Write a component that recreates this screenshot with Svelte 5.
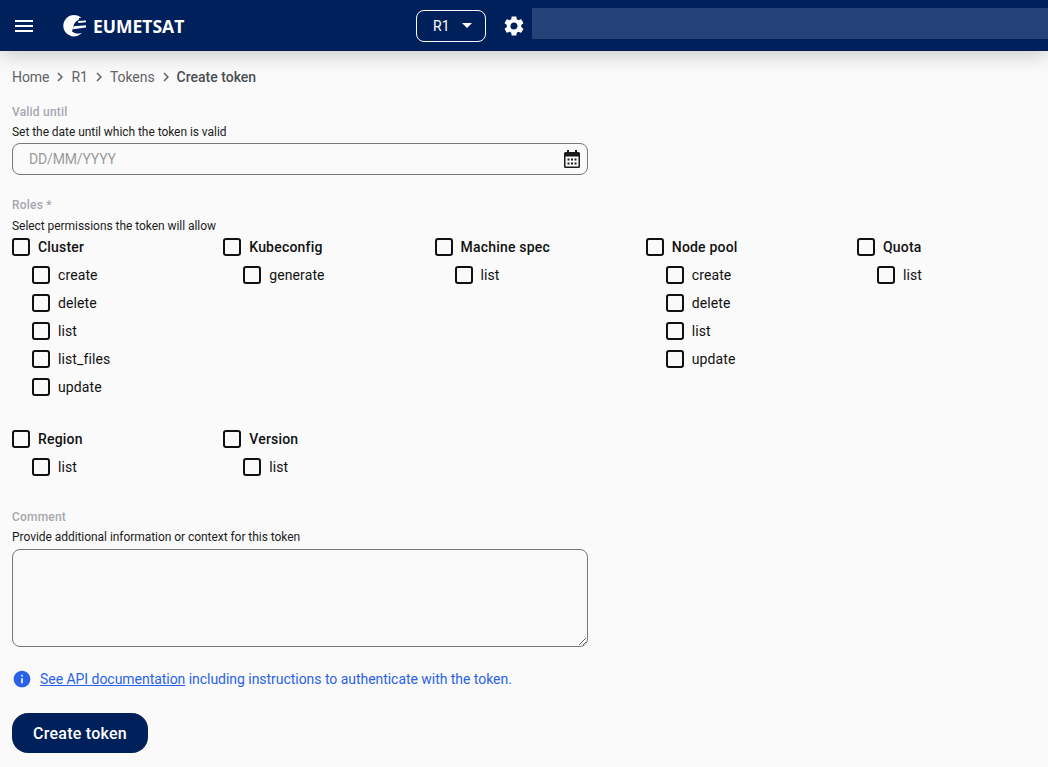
<script>
  const groups = [
    { name: 'Cluster', items: ['create', 'delete', 'list', 'list_files', 'update'] },
    { name: 'Kubeconfig', items: ['generate'] },
    { name: 'Machine spec', items: ['list'] },
    { name: 'Node pool', items: ['create', 'delete', 'list', 'update'] },
    { name: 'Quota', items: ['list'] },
    { name: 'Region', items: ['list'] },
    { name: 'Version', items: ['list'] }
  ];
  const crumbs = ['Home', 'R1', 'Tokens'];
</script>

<header class="topbar">
  <button class="menu" aria-label="Menu">
    <svg width="24" height="24" viewBox="0 0 24 24"><path d="M3 18h18v-2H3v2zm0-5h18v-2H3v2zm0-7v2h18V6H3z" fill="#fff" /></svg>
  </button>
  <div class="logo">
    <svg width="24" height="24" viewBox="0 0 24 24">
      <circle cx="11" cy="11.700" r="10.700" fill="#fff" />
      <path d="M16 5.500C12.500 7 10.500 10 10 14l-1 3.500c3 2.500 8 3 14 0V4H16z" fill="#00205b" />
      <path d="M15 7l8-.5V8.200l-7.500.8zM10.500 12.300 23 11.200v2.200L10 15.200z" fill="#fff" />
    </svg>
    <span>EUMETSAT</span>
  </div>
  <button class="region">
    <span>R1</span>
    <svg width="10" height="5" viewBox="0 0 10 5"><path d="M0 0l5 5 5-5z" fill="#fff" /></svg>
  </button>
  <button class="gear" aria-label="Settings">
    <svg width="24" height="24" viewBox="0 0 24 24"><path d="M19.140 12.940c.04-.3.060-.61.060-.94 0-.32-.02-.64-.07-.94l2.030-1.580a.49.49 0 0 0 .12-.61l-1.920-3.320a.49.49 0 0 0-.59-.22l-2.390.96c-.5-.38-1.030-.7-1.620-.94l-.36-2.540a.484.484 0 0 0-.48-.41h-3.840c-.24 0-.43.170-.47.410l-.36 2.540c-.59.240-1.130.570-1.620.94l-2.390-.96a.48.48 0 0 0-.59.220L2.740 8.870c-.12.210-.08.470.12.610l2.030 1.580c-.05.3-.09.630-.09.940s.02.640.07.940l-2.030 1.580a.49.49 0 0 0-.12.610l1.920 3.320c.12.220.37.290.59.220l2.390-.96c.5.380 1.030.7 1.620.94l.36 2.540c.05.240.24.410.48.410h3.840c.24 0 .44-.17.47-.41l.36-2.540c.59-.24 1.130-.56 1.620-.94l2.390.96c.22.080.47 0 .59-.22l1.920-3.320c.12-.22.070-.47-.12-.61l-2.010-1.580zM12 15.600A3.610 3.610 0 0 1 8.400 12c0-1.980 1.620-3.600 3.600-3.600s3.600 1.620 3.600 3.600-1.620 3.600-3.600 3.600z" fill="#fff" /></svg>
  </button>
  <div class="search"></div>
</header>

<main class="page">
  <nav class="crumbs">
    {#each crumbs as crumb}
      <span>{crumb}</span>
      <svg width="18" height="18" viewBox="0 0 24 24"><path d="M8.590 16.590 13.170 12 8.590 7.410 10 6l6 6-6 6z" fill="#5f6368" /></svg>
    {/each}
    <span class="current">Create token</span>
  </nav>

  <section class="field first">
    <div class="label">Valid until</div>
    <div class="hint">Set the date until which the token is valid</div>
    <div class="date">
      <span>DD/MM/YYYY</span>
      <svg width="20" height="20" viewBox="0 0 20 20">
        <path d="M5 1h2v2h6V1h2v2h1.500A1.500 1.500 0 0 1 18 4.500v13a1.500 1.500 0 0 1-1.500 1.500h-13A1.500 1.500 0 0 1 2 17.500v-13A1.500 1.500 0 0 1 3.500 3H5z" fill="#1a1a1a" />
        <rect x="3.500" y="7.500" width="13" height="10" fill="#fafafa" />
        <path d="M5.500 9.500h2v2h-2zM9 9.500h2v2H9zM12.500 9.500h2v2h-2zM5.500 13.500h2v2h-2zM9 13.500h2v2H9zM12.500 13.500h2v2h-2z" fill="#1a1a1a" />
      </svg>
    </div>
  </section>

  <section class="field roles">
    <div class="label">Roles *</div>
    <div class="hint">Select permissions the token will allow</div>
    <div class="grid">
      {#each groups as group}
        <div class="group">
          <label class="check parent"><span class="box"></span>{group.name}</label>
          {#each group.items as item}
            <label class="check child"><span class="box"></span>{item}</label>
          {/each}
        </div>
      {/each}
    </div>
  </section>

  <section class="field comment">
    <div class="label">Comment</div>
    <div class="hint">Provide additional information or context for this token</div>
    <textarea></textarea>
  </section>

  <p class="info">
    <svg width="20" height="20" viewBox="0 0 24 24"><path d="M12 2C6.480 2 2 6.480 2 12s4.480 10 10 10 10-4.480 10-10S17.520 2 12 2zm1 15h-2v-6h2v6zm0-8h-2V7h2v2z" fill="#2962e8" /></svg>
    <span><a href="#docs">See API documentation</a> including instructions to authenticate with the token.</span>
  </p>

  <button class="submit">Create token</button>
</main>

<style>
  :global(body) {
    margin: 0;
    background: #fafafa;
    font-family: Roboto, "Liberation Sans", sans-serif;
    color: #111;
  }

  button {
    border: 0;
    background: none;
    padding: 0;
    font: inherit;
    color: inherit;
  }

  .topbar {
    display: flex;
    align-items: center;
    height: 51px;
    background: #00205b;
    box-shadow: 0 4px 20px rgba(0, 0, 0, 0.2);
    color: #fff;
  }

  .menu {
    display: flex;
    margin-left: 12px;
  }

  .logo {
    display: flex;
    align-items: center;
    width: 353px;
    margin-left: 27px;
    gap: 6px;
  }

  .logo span {
    font-family: "Open Sans", sans-serif;
    font-weight: 700;
    font-size: 17.500px;
    letter-spacing: 0;
  }

  .region {
    display: flex;
    align-items: center;
    justify-content: space-between;
    box-sizing: border-box;
    width: 70px;
    height: 32px;
    padding: 0 13px 0 16px;
    border: 1px solid #fff;
    border-radius: 8px;
    font-size: 14px;
  }

  .gear {
    display: flex;
    margin-left: 16px;
  }

  .search {
    flex: 1;
    align-self: flex-start;
    height: 31px;
    margin-top: 8px;
    margin-left: 6px;
    background: #254379;
  }

  .page {
    padding: 17px 12px 14px;
  }

  .crumbs {
    display: flex;
    align-items: center;
    gap: 2px;
    height: 18px;
    font-size: 14px;
    letter-spacing: -0.05px;
    color: #5f6368;
  }

  .crumbs .current {
    font-weight: 500;
    letter-spacing: 0;
    color: #4a4d52;
  }

  .label {
    font-size: 12px;
    line-height: 14px;
    font-weight: 500;
    letter-spacing: 0.2px;
    color: #a6a7ad;
  }

  .hint {
    margin-top: 7px;
    font-size: 12px;
    line-height: 12px;
    letter-spacing: -0.05px;
    color: #1c1c1c;
  }

  .first {
    margin-top: 19px;
  }

  .date {
    display: flex;
    align-items: center;
    justify-content: space-between;
    box-sizing: border-box;
    width: 576px;
    height: 32px;
    margin-top: 5px;
    padding: 0 5px 0 16px;
    border: 1px solid #79747e;
    border-radius: 8px;
    font-size: 14px;
    letter-spacing: -0.15px;
    color: #9b9b9b;
  }

  .roles {
    margin-top: 23px;
  }

  .roles .hint {
    margin-top: 8px;
  }

  .grid {
    display: grid;
    grid-template-columns: repeat(5, 211.250px);
    row-gap: 24px;
    margin-top: 1px;
  }

  .check {
    display: flex;
    align-items: center;
    height: 28px;
    font-size: 14px;
    letter-spacing: 0.1px;
  }

  .parent {
    font-weight: 500;
    letter-spacing: 0.2px;
  }

  .child {
    padding-left: 20px;
  }

  .box {
    box-sizing: border-box;
    width: 18px;
    height: 18px;
    margin-right: 8px;
    border: 2px solid #111;
    border-radius: 3px;
  }

  .comment {
    margin-top: 29px;
  }

  textarea {
    display: block;
    box-sizing: border-box;
    width: 576px;
    height: 98px;
    margin-top: 6px;
    border: 1px solid #79747e;
    border-radius: 8px;
    background: transparent;
    outline: none;
  }

  .info {
    display: flex;
    align-items: center;
    gap: 8px;
    height: 20px;
    margin: 22px 0 0;
    font-size: 14px;
    letter-spacing: -0.04px;
    color: #2962e8;
  }

  .info a {
    color: inherit;
  }

  .submit {
    display: block;
    width: 136px;
    height: 40px;
    margin-top: 24px;
    border-radius: 16px;
    background: #00205b;
    color: #fff;
    font-size: 16px;
    font-weight: 500;
    letter-spacing: 0.25px;
  }
</style>
